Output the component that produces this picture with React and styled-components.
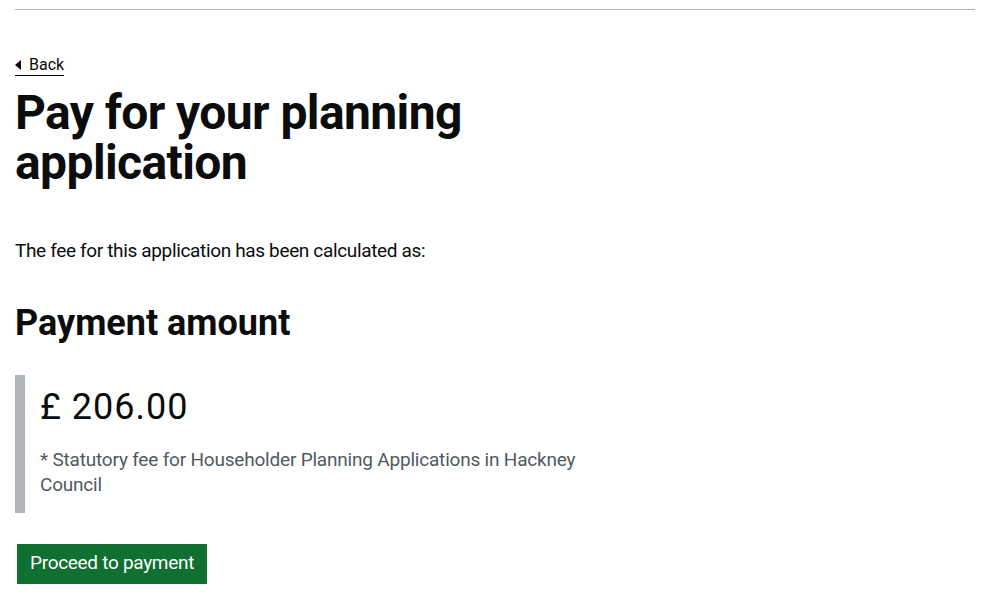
import React from 'react';
import styled, { createGlobalStyle } from 'styled-components';

const GlobalStyle = createGlobalStyle`
  body {
    margin: 0;
    background: #ffffff;
    color: #0b0c0c;
    font-family: Roboto, "Liberation Sans", Arial, sans-serif;
  }
`;

const Page = styled.div`
  max-width: 960px;
  margin: 0 15px;
`;

const TopRule = styled.div`
  height: 9px;
  border-bottom: 1px solid #b1b4b6;
`;

const BackLink = styled.a`
  display: inline-block;
  position: relative;
  margin-top: 45px;
  padding-left: 14px;
  font-size: 16px;
  line-height: 20px;
  color: #0b0c0c;
  text-decoration: none;
  border-bottom: 1px solid #0b0c0c;

  &::before {
    content: "";
    position: absolute;
    left: 0;
    top: 0;
    bottom: 0;
    margin: auto;
    width: 0;
    height: 0;
    border-style: solid;
    border-color: transparent;
    border-width: 5px 6px 5px 0;
    border-right-color: #0b0c0c;
  }
`;

const Column = styled.main`
  max-width: 610px;
`;

const Heading = styled.h1`
  margin: 12px 0 50px;
  font-size: 48px;
  line-height: 50px;
  font-weight: 700;
  letter-spacing: -0.6px;
`;

const Body = styled.p`
  margin: 0 0 40px;
  font-size: 19px;
  line-height: 25px;
  letter-spacing: -0.35px;
`;

const SubHeading = styled.h2`
  margin: 0 0 32px;
  font-size: 36px;
  line-height: 40px;
  font-weight: 700;
`;

const Inset = styled.div`
  padding: 12px 15px 16px;
  border-left: 10px solid #b1b4b6;
  margin-bottom: 31px;
`;

const Amount = styled.div`
  font-size: 36px;
  line-height: 40px;
  letter-spacing: 1px;
  margin-bottom: 20px;
`;

const Hint = styled.div`
  font-size: 19px;
  line-height: 25px;
  letter-spacing: -0.2px;
  color: #505a5f;
`;

const Button = styled.button`
  margin-left: 2px;
  padding: 7px 11px 10px;
  border: 2px solid transparent;
  border-radius: 0;
  background: #0f7031;
  color: #ffffff;
  font-family: inherit;
  font-size: 19px;
  line-height: 19px;
  letter-spacing: -0.3px;
  box-shadow: 0 2px 0 #002d18;
  cursor: pointer;
`;

export default function App() {
  return (
    <>
      <GlobalStyle />
      <Page>
        <TopRule />
        <BackLink href="#">Back</BackLink>
        <Column>
          <Heading>Pay for your planning application</Heading>
          <Body>The fee for this application has been calculated as:</Body>
          <SubHeading>Payment amount</SubHeading>
          <Inset>
            <Amount>£ 206.00</Amount>
            <Hint>* Statutory fee for Householder Planning Applications in Hackney Council</Hint>
          </Inset>
          <Button>Proceed to payment</Button>
        </Column>
      </Page>
    </>
  );
}
